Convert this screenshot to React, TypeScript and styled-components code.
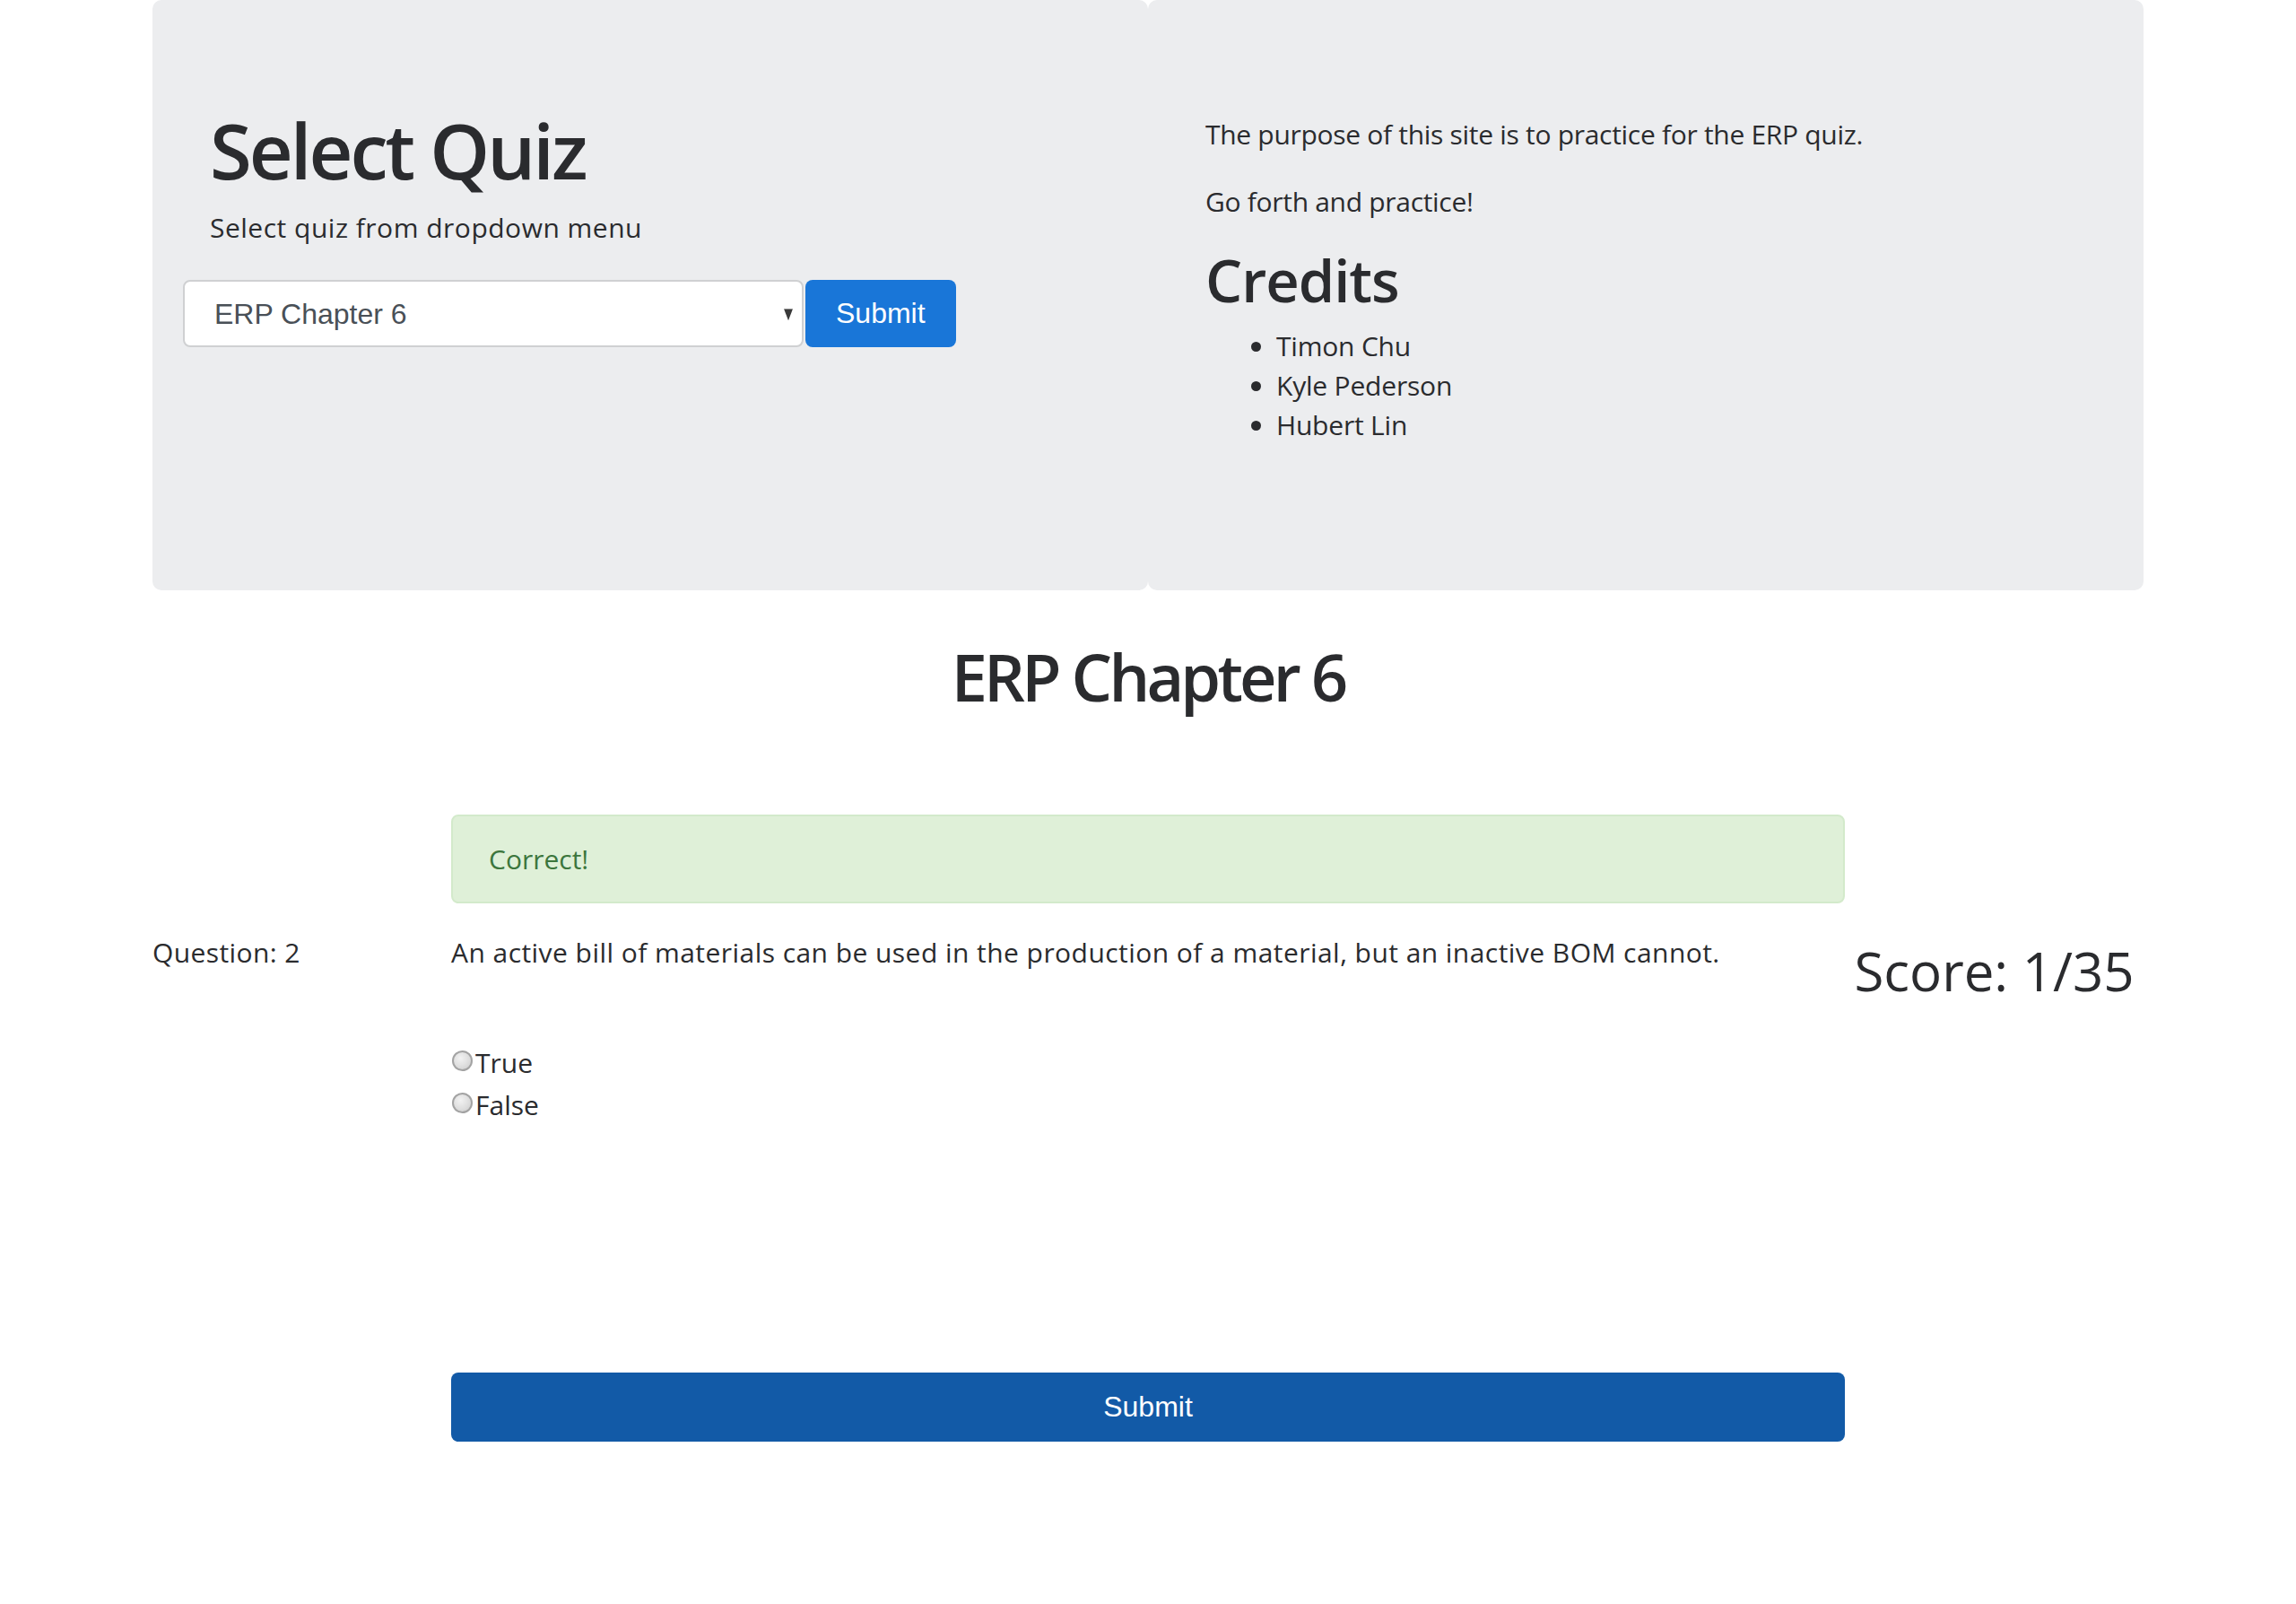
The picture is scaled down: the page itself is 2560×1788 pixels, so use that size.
import React from "react";
import styled, { createGlobalStyle } from "styled-components";

const GlobalStyle = createGlobalStyle`
  html, body {
    margin: 0;
    padding: 0;
    background: #ffffff;
  }
  body {
    font-family: "Open Sans", "Noto Sans", sans-serif;
    color: #2a2b2e;
  }
  * { box-sizing: border-box; }
`;

const Container = styled.div`
  width: 2220px;
  margin: 0 auto;
  padding-bottom: 160px;
`;

const HeroRow = styled.div`
  display: flex;
  align-items: stretch;
`;

const Panel = styled.section`
  flex: 1 1 0;
  background: #ecedef;
  border-radius: 10px;
  padding: 128px 64px 162px;
`;

const QuizTitle = styled.h1`
  margin: 0;
  font-size: 85px;
  line-height: 78px;
  font-weight: 600;
  letter-spacing: -3px;
`;

const Lead = styled.p`
  margin: 26px 0 0;
  font-size: 30px;
  line-height: 44px;
  letter-spacing: 0.5px;
`;

const SelectRow = styled.form`
  display: flex;
  gap: 2px;
  margin: 36px -30px 0;
`;

const SelectWrap = styled.div`
  position: relative;
  width: 692px;
  height: 75px;
`;

const QuizSelect = styled.select`
  appearance: none;
  -webkit-appearance: none;
  width: 100%;
  height: 100%;
  border: 2px solid #cfd0d2;
  border-radius: 8px;
  background: #ffffff;
  padding: 0 44px 0 33px;
  font-family: "Liberation Sans", Arial, sans-serif;
  font-size: 32px;
  color: #495057;
  outline: none;
`;

const Caret = styled.svg`
  position: absolute;
  right: 12px;
  top: 50%;
  transform: translateY(-45%);
  pointer-events: none;
`;

const PrimaryButton = styled.button<{ $tone?: "bright" | "deep"; $block?: boolean }>`
  height: ${(p) => (p.$block ? "77px" : "75px")};
  width: ${(p) => (p.$block ? "100%" : "auto")};
  padding: 0 34px;
  border: none;
  border-radius: 8px;
  background: ${(p) => (p.$tone === "deep" ? "#125aa7" : "#1976d8")};
  color: #ffffff;
  font-family: "Liberation Sans", Arial, sans-serif;
  font-size: 32px;
  cursor: pointer;
`;

const InfoText = styled.p`
  margin: 0 0 31px;
  font-size: 30px;
  line-height: 44px;
  letter-spacing: -0.3px;
`;

const CreditsTitle = styled.h2`
  margin: 0;
  font-size: 65px;
  line-height: 69px;
  font-weight: 600;
  letter-spacing: -1px;
`;

const CreditsList = styled.ul`
  margin: 17px 0 0;
  padding-left: 79px;
  font-size: 30px;
  line-height: 44px;
  letter-spacing: -0.2px;
`;

const ChapterTitle = styled.h1`
  margin: 52px 0 0;
  text-align: center;
  font-size: 72px;
  line-height: 88px;
  font-weight: 600;
  letter-spacing: -3.8px;
`;

const Grid = styled.div<{ $gap: number }>`
  display: grid;
  grid-template-columns: 15% 70% 15%;
  margin-top: ${(p) => p.$gap}px;
`;

const Alert = styled.div`
  grid-column: 2;
  background: #dff0d8;
  border: 2px solid #d3eacb;
  border-radius: 8px;
  color: #3c763d;
  padding: 24px 40px;
  font-size: 30px;
  line-height: 47px;
`;

const QuestionLabel = styled.div`
  font-size: 30px;
  line-height: 44px;
  letter-spacing: 0.4px;
`;

const QuestionBody = styled.div`
  display: flex;
  flex-direction: column;
`;

const QuestionText = styled.p`
  margin: 0;
  font-size: 30px;
  line-height: 44px;
  letter-spacing: 0.45px;
`;

const Options = styled.div`
  display: flex;
  flex-direction: column;
  margin: 77px 0 275px;
`;

const OptionLabel = styled.label`
  display: flex;
  align-items: center;
  height: 47px;
  font-size: 30px;
`;

const Radio = styled.input`
  appearance: none;
  -webkit-appearance: none;
  width: 23px;
  height: 23px;
  margin: 0 3px 5px 1px;
  border: 2px solid #a3a3a3;
  border-radius: 50%;
  background: radial-gradient(circle at 40% 35%, #f2f2f2 0%, #dedede 55%, #c9c9c9 100%);
  flex: none;
`;

const Score = styled.div`
  margin-top: 6px;
  text-align: center;
  font-size: 60px;
  line-height: 72px;
`;

export default function App() {
  return (
    <>
      <GlobalStyle />
      <Container>
        <HeroRow>
          <Panel>
            <QuizTitle>Select Quiz</QuizTitle>
            <Lead>Select quiz from dropdown menu</Lead>
            <SelectRow onSubmit={(e) => e.preventDefault()}>
              <SelectWrap>
                <QuizSelect defaultValue="6">
                  <option value="6">ERP Chapter 6</option>
                </QuizSelect>
                <Caret width="10" height="13" viewBox="0 0 10 13">
                  <polygon points="0,0 10,0 5,13" fill="#3a3a3a" />
                </Caret>
              </SelectWrap>
              <PrimaryButton type="submit" $tone="bright">
                Submit
              </PrimaryButton>
            </SelectRow>
          </Panel>
          <Panel>
            <InfoText>The purpose of this site is to practice for the ERP quiz.</InfoText>
            <InfoText>Go forth and practice!</InfoText>
            <CreditsTitle>Credits</CreditsTitle>
            <CreditsList>
              <li>Timon Chu</li>
              <li>Kyle Pederson</li>
              <li>Hubert Lin</li>
            </CreditsList>
          </Panel>
        </HeroRow>

        <ChapterTitle>ERP Chapter 6</ChapterTitle>

        <Grid $gap={110}>
          <Alert>Correct!</Alert>
        </Grid>

        <Grid $gap={33}>
          <QuestionLabel>Question: 2</QuestionLabel>
          <QuestionBody>
            <QuestionText>
              An active bill of materials can be used in the production of a material, but an inactive BOM cannot.
            </QuestionText>
            <Options>
              <OptionLabel>
                <Radio type="radio" name="answer" value="true" />
                True
              </OptionLabel>
              <OptionLabel>
                <Radio type="radio" name="answer" value="false" />
                False
              </OptionLabel>
            </Options>
            <PrimaryButton type="button" $tone="deep" $block>
              Submit
            </PrimaryButton>
          </QuestionBody>
          <Score>Score: 1/35</Score>
        </Grid>
      </Container>
    </>
  );
}
